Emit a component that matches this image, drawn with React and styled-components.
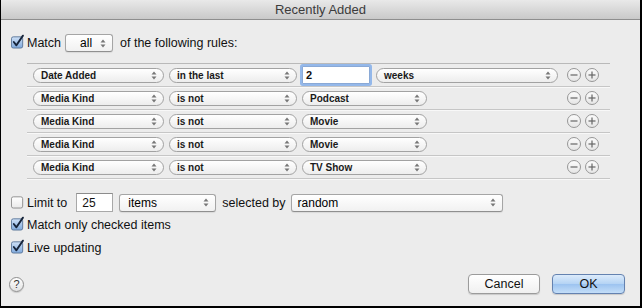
import styled, { createGlobalStyle } from 'styled-components'

const GlobalStyle = createGlobalStyle`
  html, body {
    margin: 0;
    padding: 0;
    background: #000;
  }
  * {
    box-sizing: border-box;
  }
`

const FONT = `"Liberation Sans", Arial, sans-serif`

const rules = [
  { field: 'Date Added', op: 'in the last', value: '2', unit: 'weeks' },
  { field: 'Media Kind', op: 'is not', value: 'Podcast' },
  { field: 'Media Kind', op: 'is not', value: 'Movie' },
  { field: 'Media Kind', op: 'is not', value: 'Movie' },
  { field: 'Media Kind', op: 'is not', value: 'TV Show' },
]

const Arrows = () => (
  <svg width="6" height="9" viewBox="0 0 6 9">
    <path d="M3 0.5 L5.5 3.5 L0.5 3.5 Z" fill="#777" />
    <path d="M3 8.5 L5.5 5.5 L0.5 5.5 Z" fill="#777" />
  </svg>
)

const CheckBox = ({ checked }) => (
  <BoxWrap>
    <svg width="15" height="15" viewBox="0 0 15 15">
      <defs>
        <linearGradient id={checked ? 'cbOn' : 'cbOff'} x1="0" y1="0" x2="0" y2="1">
          <stop offset="0" stopColor={checked ? '#cfe1f7' : '#ffffff'} />
          <stop offset="1" stopColor={checked ? '#7fa9dc' : '#e9e9e9'} />
        </linearGradient>
      </defs>
      <rect x="0.5" y="2.5" width="12" height="12" rx="2" fill={`url(#${checked ? 'cbOn' : 'cbOff'})`} stroke={checked ? '#5a7599' : '#8c8c8c'} />
      {checked && <path d="M3 8 L5.8 11.6 L12.8 1.2" fill="none" stroke="#16243a" strokeWidth="2" strokeLinecap="round" strokeLinejoin="round" />}
    </svg>
  </BoxWrap>
)

const Pill = ({ width, children }) => (
  <PillButton $w={width}>
    <span>{children}</span>
    <Arrows />
  </PillButton>
)

const Popup = ({ width, pad, children }) => (
  <PopupButton $w={width} $pad={pad}>
    <span>{children}</span>
    <Arrows />
  </PopupButton>
)

const RoundButton = ({ sign }) => (
  <Round>
    <svg width="14" height="14" viewBox="0 0 14 14">
      <path d="M3.5 7 H10.5" stroke="#666" strokeWidth="1.2" />
      {sign === '+' && <path d="M7 3.5 V10.5" stroke="#666" strokeWidth="1.2" />}
    </svg>
  </Round>
)

const App = () => {
  return (
    <>
      <GlobalStyle />
      <Window>
        <TitleBar>Recently Added</TitleBar>
        <Content>
          <MatchRow>
            <CheckBox checked />
            <Label $mr={4}>Match</Label>
            <Popup width={48} pad={14}>all</Popup>
            <Label $ml={7}>of the following rules:</Label>
          </MatchRow>

          <RuleList>
            {rules.map((r, i) => (
              <RuleRow key={i}>
                <Pill width={131}>{r.field}</Pill>
                <Pill width={128}>{r.op}</Pill>
                {r.unit ? (
                  <>
                    <FocusField>{r.value}</FocusField>
                    <Pill width={182}>{r.unit}</Pill>
                  </>
                ) : (
                  <Pill width={125}>{r.value}</Pill>
                )}
                <Controls>
                  <RoundButton sign="-" />
                  <RoundButton sign="+" />
                </Controls>
              </RuleRow>
            ))}
          </RuleList>

          <LimitRow>
            <CheckBox />
            <Label>Limit to</Label>
            <TextField $w={37} $ml={3}>25</TextField>
            <Popup width={97} pad={8}>items</Popup>
            <Label $ml={6} $mr={5}>selected by</Label>
            <Popup width={212} pad={6}>random</Popup>
          </LimitRow>
          <OptionRow>
            <CheckBox checked />
            <Label>Match only checked items</Label>
          </OptionRow>
          <OptionRow>
            <CheckBox checked />
            <Label>Live updating</Label>
          </OptionRow>
        </Content>

        <Footer>
          <HelpButton>?</HelpButton>
          <Buttons>
            <PushButton>Cancel</PushButton>
            <PushButton $primary>OK</PushButton>
          </Buttons>
        </Footer>
      </Window>
    </>
  )
}

export default App

const Window = styled.div`
  width: 642px;
  height: 308px;
  display: flex;
  flex-direction: column;
  background: #ececec;
  border-left: 1px solid #000;
  border-right: 2px solid #000;
  border-bottom: 2px solid #000;
  font-family: ${FONT};
  color: #111;
  overflow: hidden;
`

const TitleBar = styled.div`
  height: 20px;
  flex-shrink: 0;
  display: flex;
  align-items: center;
  justify-content: center;
  background: linear-gradient(#e9e9e9, #c9c9c9);
  border-bottom: 1px solid #8e8e8e;
  font-size: 13px;
  color: #3c3c3c;
`

const Content = styled.div`
  padding: 14px 0 0 10px;
  display: flex;
  flex-direction: column;
`

const BoxWrap = styled.span`
  display: inline-flex;
  width: 14px;
  height: 15px;
  margin-top: -3px;
  flex-shrink: 0;
`

const Label = styled.span`
  font-size: 12.5px;
  color: #111;
  margin-left: ${p => p.$ml ?? 2}px;
  margin-right: ${p => p.$mr ?? 6}px;
  white-space: nowrap;
`

const MatchRow = styled.div`
  display: flex;
  align-items: center;
  height: 18px;
`

const PopupButton = styled.div`
  width: ${p => p.$w}px;
  height: 18px;
  display: flex;
  align-items: center;
  justify-content: space-between;
  padding: 0 6px 0 ${p => p.$pad}px;
  border: 1px solid #a5a5a5;
  border-bottom-color: #8f8f8f;
  border-radius: 3px;
  background: linear-gradient(#ffffff, #f1f1f1);
  box-shadow: 0 1px 1px rgba(0, 0, 0, 0.08);
  font-size: 12px;
  color: #000;
  flex-shrink: 0;
  span {
    white-space: nowrap;
  }
`

const RuleList = styled.div`
  margin: 11px 0 0 16px;
  width: 583px;
  border-top: 1px solid #b9b9b9;
`

const RuleRow = styled.div`
  height: 23px;
  display: flex;
  align-items: center;
  gap: 5px;
  padding: 0 11px 0 6px;
  border-bottom: 1px solid #c6c6c6;
  box-shadow: 0 1px 0 #f8f8f8;
`

const PillButton = styled.div`
  width: ${p => p.$w}px;
  height: 15px;
  display: flex;
  align-items: center;
  justify-content: space-between;
  padding: 0 6px 0 7px;
  border: 1px solid #a2a2a2;
  border-radius: 8px;
  background: linear-gradient(#ffffff, #ededed);
  font-size: 10px;
  font-weight: 700;
  color: #1a1a1a;
  flex-shrink: 0;
  span {
    white-space: nowrap;
  }
`

const FocusField = styled.div`
  width: 68px;
  height: 18px;
  display: flex;
  align-items: center;
  padding-left: 3px;
  margin-right: 1px;
  background: #fff;
  border: 1px solid #8aa9d6;
  box-shadow: 0 0 0 2px #94b8ea;
  border-radius: 1px;
  font-size: 11px;
  font-weight: 700;
  flex-shrink: 0;
`

const Controls = styled.div`
  margin-left: auto;
  display: flex;
  gap: 4px;
`

const Round = styled.span`
  width: 14px;
  height: 14px;
  display: inline-flex;
  border: 1px solid #979797;
  border-radius: 50%;
  background: linear-gradient(#fbfbfb, #e6e6e6);
  svg {
    margin: -1px;
  }
`

const LimitRow = styled.div`
  margin-top: 14px;
  height: 19px;
  display: flex;
  align-items: center;
`

const TextField = styled.div`
  width: ${p => p.$w}px;
  height: 19px;
  margin-left: ${p => p.$ml}px;
  margin-right: 6px;
  display: flex;
  align-items: center;
  padding-left: 5px;
  background: #fff;
  border: 1px solid #a8a8a8;
  border-top-color: #8c8c8c;
  font-size: 12px;
  flex-shrink: 0;
`

const OptionRow = styled.div`
  height: 23px;
  display: flex;
  align-items: center;
  padding-top: 3px;
`

const Footer = styled.div`
  margin-top: auto;
  padding: 0 15px 12px 8px;
  display: flex;
  align-items: center;
  justify-content: space-between;
`

const HelpButton = styled.div`
  width: 15px;
  height: 15px;
  border-radius: 50%;
  border: 1px solid #8e8e8e;
  background: linear-gradient(#ffffff, #e2e2e2);
  display: flex;
  align-items: center;
  justify-content: center;
  font-size: 11px;
  color: #333;
  box-shadow: 0 1px 1px rgba(0, 0, 0, 0.15);
`

const Buttons = styled.div`
  display: flex;
  gap: 12px;
`

const PushButton = styled.div`
  width: ${p => (p.$primary ? 73 : 72)}px;
  height: 20px;
  display: flex;
  align-items: center;
  justify-content: center;
  border-radius: 4px;
  font-size: 12.5px;
  color: #111;
  border: 1px solid ${p => (p.$primary ? '#6482b0' : '#9b9b9b')};
  background: ${p =>
    p.$primary
      ? 'linear-gradient(#dcebfb 0%, #b4d3f4 50%, #9cc3f0 51%, #c4def8 100%)'
      : 'linear-gradient(#ffffff, #f0f0f0)'};
  box-shadow: 0 1px 1px rgba(0, 0, 0, 0.15);
`
